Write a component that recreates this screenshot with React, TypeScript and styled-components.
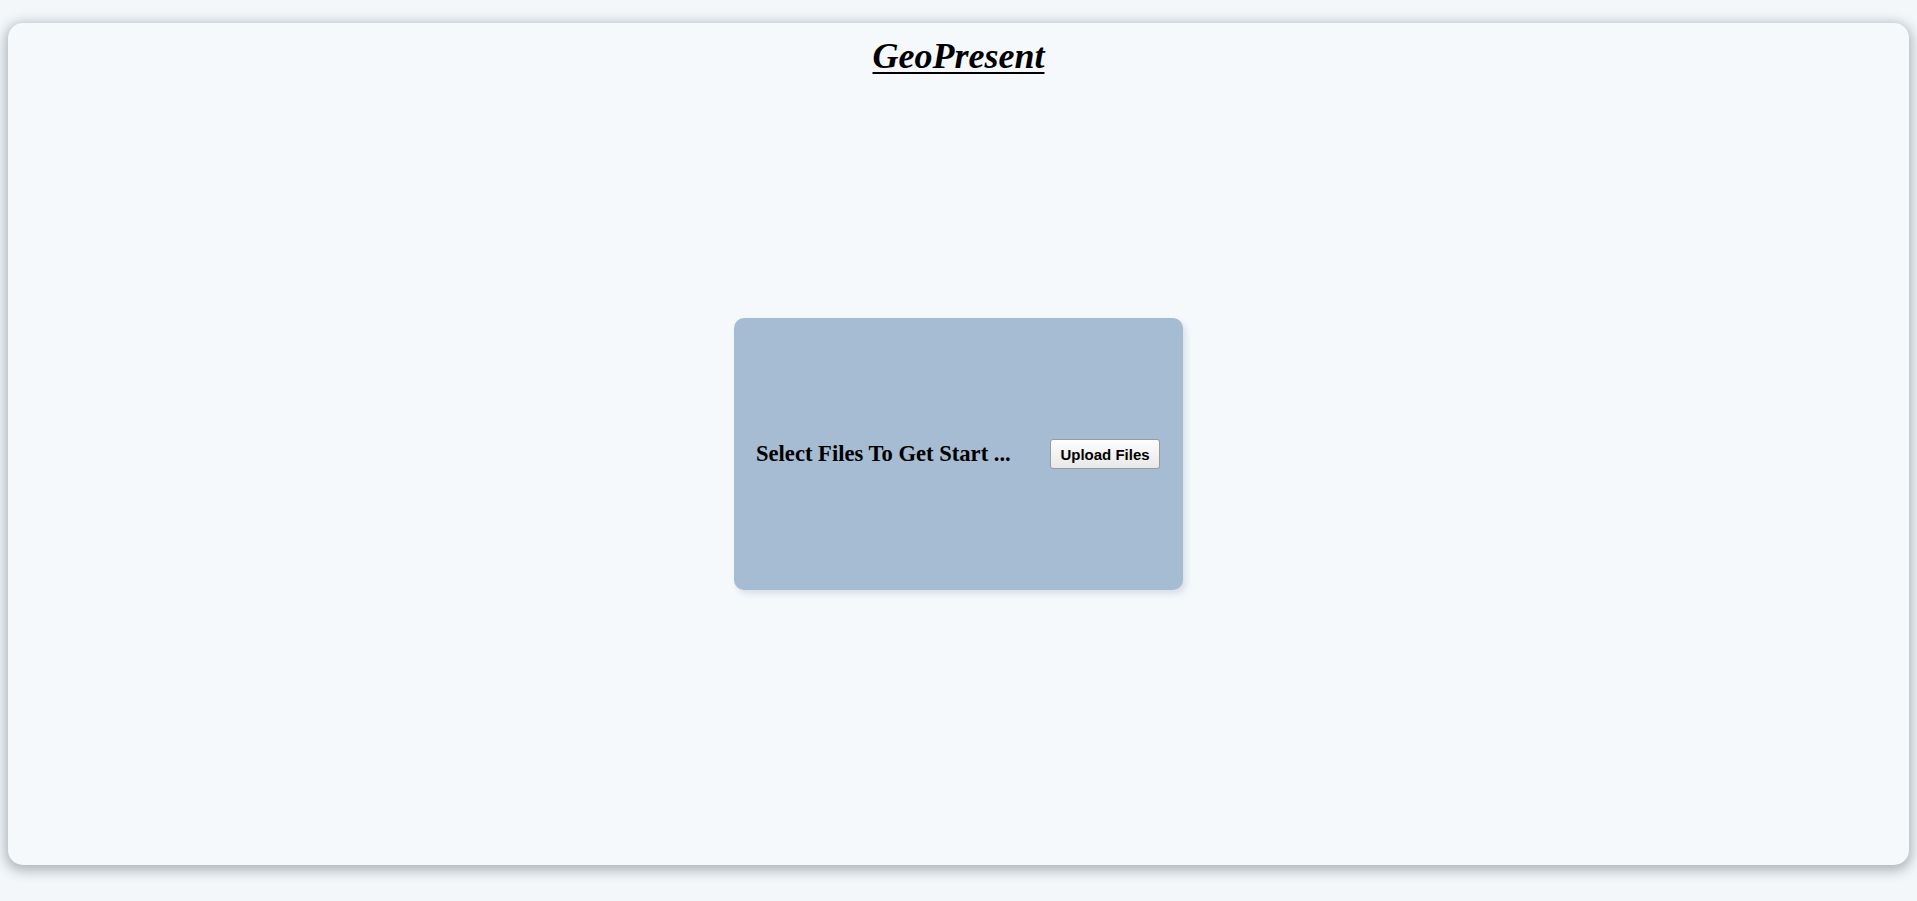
import React from "react";
import styled, { createGlobalStyle } from "styled-components";

const GlobalStyle = createGlobalStyle`
  html, body {
    margin: 0;
    padding: 0;
    background: #f3f7fa;
  }
  body {
    padding: 23px 8px 0 8px;
    font-family: "Liberation Serif", "Times New Roman", serif;
    box-sizing: border-box;
    height: 901px;
    overflow: hidden;
  }
`;

const Panel = styled.main`
  height: 842px;
  box-sizing: border-box;
  background: #f5f9fc;
  border-radius: 15px;
  box-shadow: 0 3px 12px 3px rgba(50, 60, 70, 0.34);
  display: flex;
  flex-direction: column;
  align-items: center;
`;

const Title = styled.h1`
  margin: 12px 0 0;
  font-family: "Liberation Serif", "Times New Roman", serif;
  font-size: 36px;
  font-weight: bold;
  font-style: italic;
  text-decoration: underline;
  text-decoration-thickness: 2px;
  text-underline-offset: 4px;
  color: #000;
  line-height: normal;
`;

const Stage = styled.section`
  flex: 1;
  align-self: stretch;
  display: flex;
  align-items: center;
  justify-content: center;
  padding-bottom: 34px;
`;

const Card = styled.div`
  width: 449px;
  height: 272px;
  box-sizing: border-box;
  padding: 0 23px 0 22px;
  background: #a5bcd3;
  border-radius: 10px;
  box-shadow: 3px 4px 6px rgba(90, 110, 140, 0.18);
  display: flex;
  align-items: center;
  justify-content: space-between;
`;

const Prompt = styled.h2`
  margin: 0;
  font-family: "Liberation Serif", "Times New Roman", serif;
  font-size: 22.6px;
  font-weight: bold;
  color: #000;
`;

const UploadButton = styled.button`
  height: 30px;
  width: 110px;
  padding: 0;
  font-family: "Liberation Sans", Arial, sans-serif;
  font-size: 15px;
  font-weight: bold;
  color: #000;
  background: linear-gradient(#fdfdfd, #e8e8e8);
  border: 1px solid #9a9a9a;
  border-radius: 3px;
  cursor: pointer;
`;

export default function App() {
  return (
    <>
      <GlobalStyle />
      <Panel>
        <Title>GeoPresent</Title>
        <Stage>
          <Card>
            <Prompt>Select Files To Get Start ...</Prompt>
            <UploadButton>Upload Files</UploadButton>
          </Card>
        </Stage>
      </Panel>
    </>
  );
}
